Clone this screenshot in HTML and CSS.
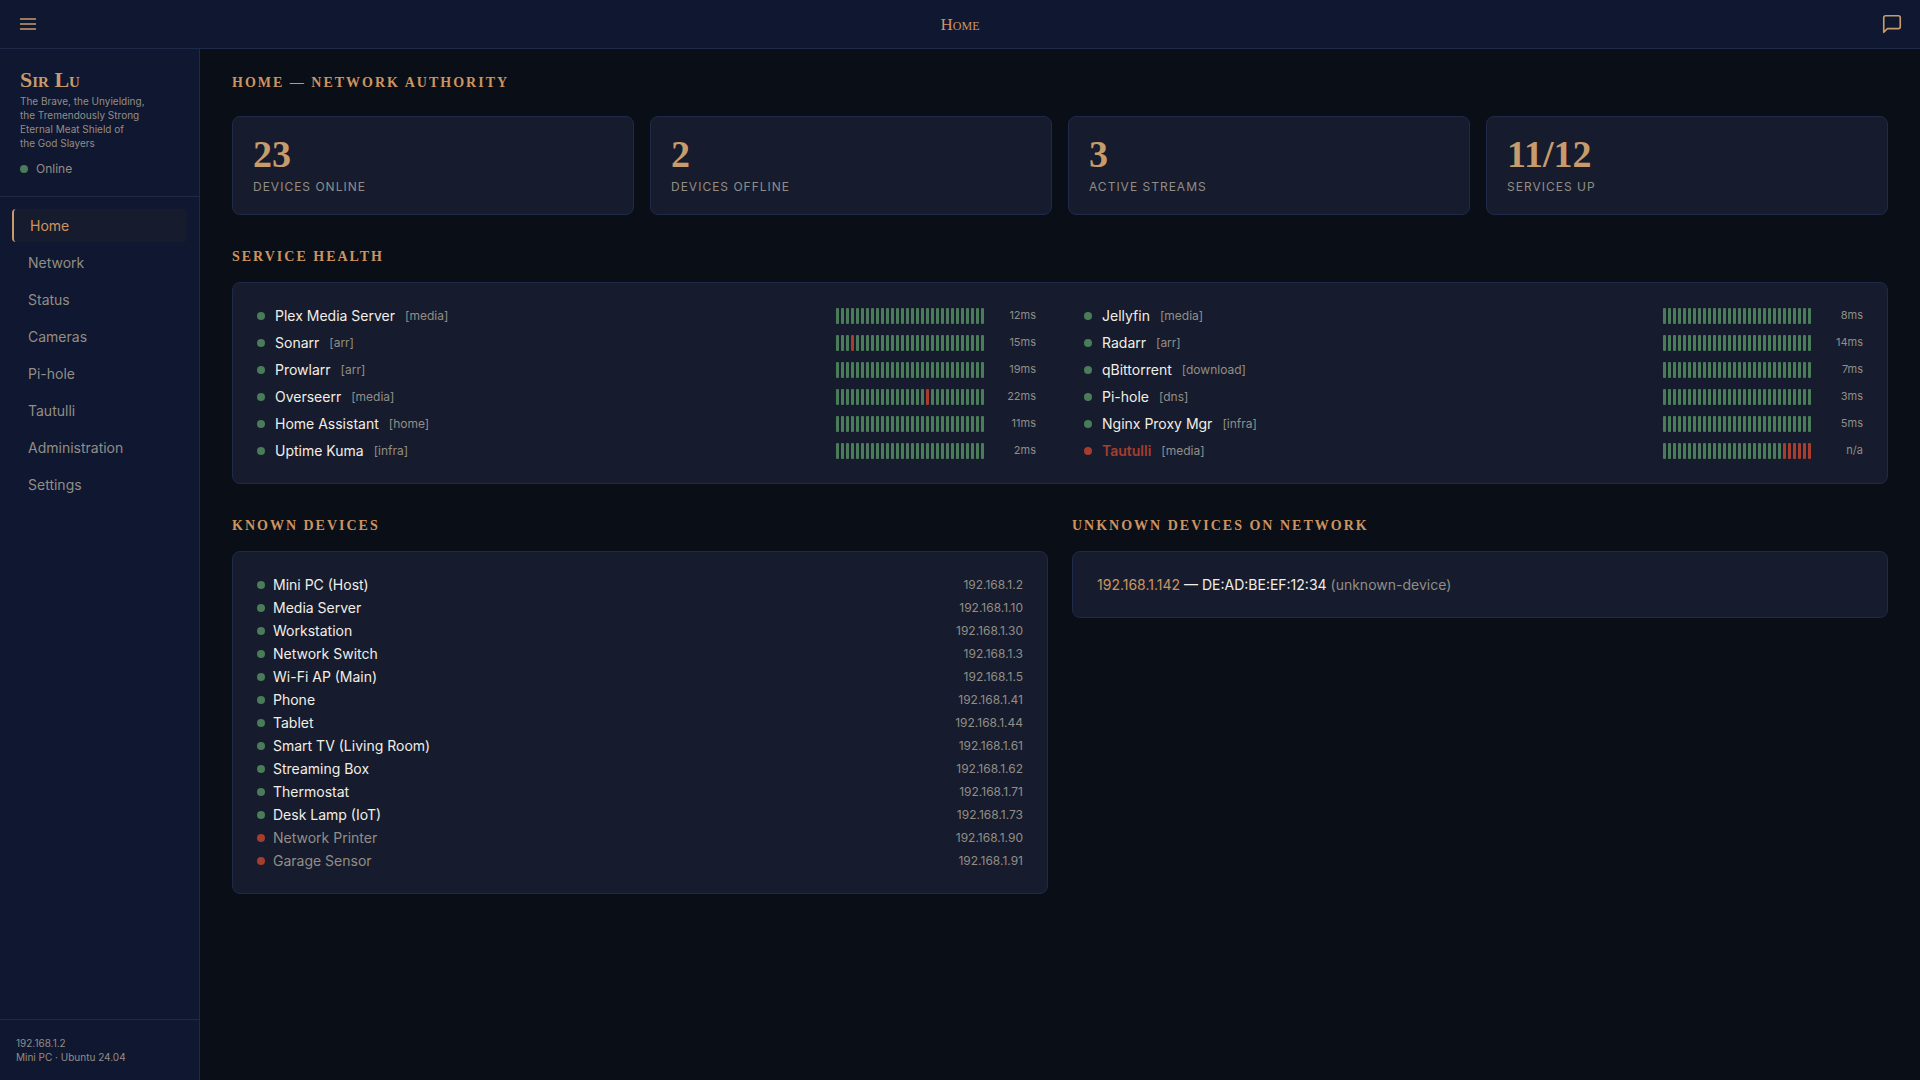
FILE: index.html
```html
<!DOCTYPE html>
<html lang="en">

<head>
  <meta charset="UTF-8">
  <meta name="viewport" content="width=device-width, initial-scale=1.0">
  <title>Home</title>
  <link rel="stylesheet" href="styles.css">
</head>

<body>
  <header class="topbar">
    <button class="icon-btn" type="button" aria-label="Toggle menu">
      <svg width="22" height="22" viewBox="0 0 22 22" fill="none" stroke="currentColor" stroke-width="1.5">
        <path d="M3 6h16M3 11h16M3 16h16" />
      </svg>
    </button>
    <span class="topbar-title">Home</span>
    <button class="icon-btn" type="button" aria-label="Open chat">
      <svg width="22" height="22" viewBox="0 0 24 24" fill="none" stroke="currentColor" stroke-width="1.8" stroke-linecap="round" stroke-linejoin="round">
        <path d="M21 15a2 2 0 0 1-2 2H7l-4 4V5a2 2 0 0 1 2-2h14a2 2 0 0 1 2 2z" />
      </svg>
    </button>
  </header>

  <div class="layout">
    <aside class="sidebar">
      <div class="profile">
        <div class="profile-name">Sir Lu</div>
        <p class="profile-title">The Brave, the Unyielding,<br>the Tremendously Strong<br>Eternal Meat Shield of<br>the God Slayers</p>
        <div class="profile-status"><span class="dot"></span>Online</div>
      </div>
      <nav class="nav">
        <a href="#" class="active">Home</a>
        <a href="#network">Network</a>
        <a href="#status">Status</a>
        <a href="#cameras">Cameras</a>
        <a href="#pihole">Pi-hole</a>
        <a href="#tautulli">Tautulli</a>
        <a href="#admin">Administration</a>
        <a href="#settings">Settings</a>
      </nav>
      <div class="sidebar-footer">
        192.168.1.2<br>
        Mini PC · Ubuntu 24.04
      </div>
    </aside>

    <main class="content">
      <h1 class="heading page-heading">Home — Network Authority</h1>

      <div class="stats">
        <div class="card stat">
          <div class="stat-value">23</div>
          <div class="stat-label">Devices Online</div>
        </div>
        <div class="card stat">
          <div class="stat-value">2</div>
          <div class="stat-label">Devices Offline</div>
        </div>
        <div class="card stat">
          <div class="stat-value">3</div>
          <div class="stat-label">Active Streams</div>
        </div>
        <div class="card stat">
          <div class="stat-value">11/12</div>
          <div class="stat-label">Services Up</div>
        </div>
      </div>

      <section class="section">
        <h2 class="heading">Service Health</h2>
        <div class="card services" id="services"></div>
      </section>

      <div class="columns">
        <section class="section">
          <h2 class="heading">Known Devices</h2>
          <ul class="card devices" id="devices"></ul>
        </section>
        <section class="section">
          <h2 class="heading">Unknown Devices on Network</h2>
          <div class="card unknown">
            <span class="unknown-ip">192.168.1.142</span> — DE:AD:BE:EF:12:34 <span class="muted">(unknown-device)</span>
          </div>
        </section>
      </div>
    </main>
  </div>

  <script src="script.js"></script>
</body>

</html>
```

FILE: styles.css
```css
* {
  box-sizing: border-box;
  margin: 0;
  padding: 0;
}

:root {
  --bg: #0a0e17;
  --panel: #101730;
  --card: #161c2d;
  --border: #1e2a47;
  --gold: #c89b6c;
  --accent: #cd9460;
  --text: #f2eee6;
  --muted: #928e86;
  --green: #4a7c59;
  --red: #a63d2f;
  --serif: "Liberation Serif", serif;
}

body {
  display: flex;
  flex-direction: column;
  min-height: 100vh;
  background: var(--bg);
  color: var(--text);
  font-family: Inter, sans-serif;
  font-size: 14px;
  line-height: 23px;
}

/* top bar */
.topbar {
  display: flex;
  align-items: center;
  justify-content: space-between;
  height: 49px;
  padding: 0 17px;
  background: var(--panel);
  border-bottom: 1px solid var(--border);
}

.topbar-title {
  font-family: var(--serif);
  font-size: 17px;
  font-variant: small-caps;
  color: var(--accent);
}

.icon-btn {
  display: flex;
  background: none;
  border: none;
  color: var(--gold);
  cursor: pointer;
}

.layout {
  display: flex;
  flex: 1;
}

/* sidebar */
.sidebar {
  display: flex;
  flex-direction: column;
  width: 200px;
  flex-shrink: 0;
  background: var(--panel);
  border-right: 1px solid var(--border);
  color: var(--muted);
}

.profile {
  padding: 19px 20px 17px;
  border-bottom: 1px solid var(--border);
}

.profile-name {
  font-family: var(--serif);
  font-size: 22px;
  font-weight: bold;
  font-variant: small-caps;
  line-height: 24px;
  color: var(--gold);
}

.profile-title {
  margin: 2px 0 9px;
  font-size: 10px;
  line-height: 14px;
}

.profile-status {
  display: flex;
  align-items: center;
  gap: 8px;
  font-size: 12px;
  line-height: 20px;
}

.nav {
  display: flex;
  flex-direction: column;
  gap: 4px;
  flex: 1;
  padding: 12px;
}

.nav a {
  padding: 5px 16px;
  border-radius: 4px;
  color: var(--muted);
  text-decoration: none;
}

.nav a:hover {
  color: var(--text);
}

.nav a.active {
  border-left: 2px solid var(--gold);
  background: var(--card);
  color: var(--accent);
}

.sidebar-footer {
  padding: 16px;
  border-top: 1px solid var(--border);
  font-size: 10px;
  line-height: 14px;
}

/* content */
.content {
  flex: 1;
  padding: 24px 32px;
}

.heading {
  margin-bottom: 16px;
  font-family: var(--serif);
  font-size: 14px;
  font-weight: bold;
  letter-spacing: 2px;
  line-height: 19px;
  text-transform: uppercase;
  color: var(--accent);
}

.page-heading {
  margin-bottom: 24px;
}

.section {
  margin-top: 32px;
}

.card {
  background: var(--card);
  border: 1px solid var(--border);
  border-radius: 8px;
  padding: 21px 24px;
}

.dot {
  width: 8px;
  height: 8px;
  flex-shrink: 0;
  border-radius: 50%;
  background: var(--green);
}

.down .dot {
  background: var(--red);
}

.muted {
  color: var(--muted);
}

.stats {
  display: grid;
  grid-template-columns: repeat(4, 1fr);
  gap: 16px;
}

.stat {
  padding: 16px 20px;
}

.stat-value {
  font-family: var(--serif);
  font-size: 38px;
  font-weight: bold;
  line-height: 42px;
  color: var(--gold);
}

.stat-label {
  font-size: 12px;
  letter-spacing: 1px;
  text-transform: uppercase;
  color: var(--muted);
}

/* service health */
.services {
  display: grid;
  grid-template-columns: 1fr 1fr;
  gap: 4px 48px;
}

.service {
  display: flex;
  align-items: center;
  gap: 10px;
}

.service.down .service-name {
  font-weight: 600;
  color: var(--red);
}

.service-tag {
  flex: 1;
  font-size: 12px;
  color: var(--muted);
}

.beats {
  display: flex;
  gap: 2px;
}

.beat {
  width: 3px;
  height: 16px;
  border-radius: 1px;
  background: var(--green);
}

.beat.fail {
  background: var(--red);
}

.service-ms {
  width: 42px;
  font-size: 11px;
  text-align: right;
  color: var(--muted);
}

/* devices */
.columns {
  display: grid;
  grid-template-columns: 1fr 1fr;
  align-items: start;
  gap: 24px;
}

.devices {
  list-style: none;
}

.device {
  display: flex;
  align-items: center;
  gap: 8px;
}

.device-name {
  flex: 1;
}

.device.down .device-name {
  color: var(--muted);
}

.device-ip {
  font-size: 12px;
  color: var(--muted);
}

.unknown-ip {
  color: var(--accent);
}
```

FILE: script.js
```js
// name, tag, latency, failed beats
const services = [
  ['Plex Media Server', 'media', '12ms', []],
  ['Jellyfin', 'media', '8ms', []],
  ['Sonarr', 'arr', '15ms', [3]],
  ['Radarr', 'arr', '14ms', []],
  ['Prowlarr', 'arr', '19ms', []],
  ['qBittorrent', 'download', '7ms', []],
  ['Overseerr', 'media', '22ms', [18]],
  ['Pi-hole', 'dns', '3ms', []],
  ['Home Assistant', 'home', '11ms', []],
  ['Nginx Proxy Mgr', 'infra', '5ms', []],
  ['Uptime Kuma', 'infra', '2ms', []],
  ['Tautulli', 'media', 'n/a', [24, 25, 26, 27, 28, 29]]
];

const devices = [
  ['Mini PC (Host)', '192.168.1.2', true],
  ['Media Server', '192.168.1.10', true],
  ['Workstation', '192.168.1.30', true],
  ['Network Switch', '192.168.1.3', true],
  ['Wi-Fi AP (Main)', '192.168.1.5', true],
  ['Phone', '192.168.1.41', true],
  ['Tablet', '192.168.1.44', true],
  ['Smart TV (Living Room)', '192.168.1.61', true],
  ['Streaming Box', '192.168.1.62', true],
  ['Thermostat', '192.168.1.71', true],
  ['Desk Lamp (IoT)', '192.168.1.73', true],
  ['Network Printer', '192.168.1.90', false],
  ['Garage Sensor', '192.168.1.91', false]
];

const BEATS = 30;

document.getElementById('services').innerHTML = services.map(([name, tag, ms, fails]) => {
  let beats = '';
  for (let i = 0; i < BEATS; i++) {
    beats += `<span class="beat${fails.includes(i) ? ' fail' : ''}"></span>`;
  }
  return `<div class="service${ms === 'n/a' ? ' down' : ''}">
    <span class="dot"></span>
    <span class="service-name">${name}</span>
    <span class="service-tag">[${tag}]</span>
    <span class="beats">${beats}</span>
    <span class="service-ms">${ms}</span>
  </div>`;
}).join('');

document.getElementById('devices').innerHTML = devices.map(([name, ip, online]) =>
  `<li class="device${online ? '' : ' down'}">
    <span class="dot"></span>
    <span class="device-name">${name}</span>
    <span class="device-ip">${ip}</span>
  </li>`
).join('');
```
